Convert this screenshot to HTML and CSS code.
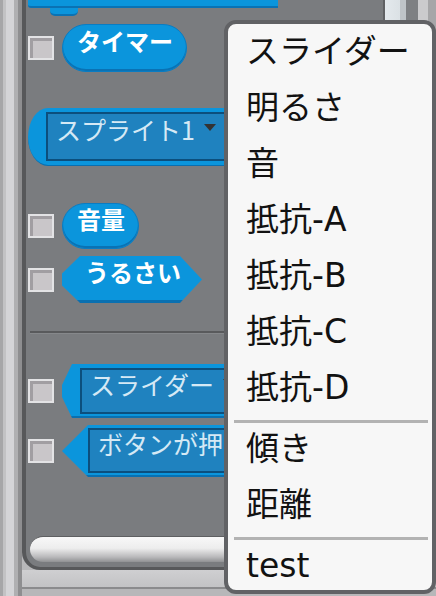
FILE: index.html
```html
<!DOCTYPE html>
<html lang="ja">
<head>
<meta charset="utf-8">
<title>Palette menu</title>
<link rel="stylesheet" href="styles.css">
</head>
<body>
<div class="app">
  <div class="lframe"></div>
  <div class="main">
    <div class="upper">
      <div class="palette">
        <div class="stack"><div class="stack-body"></div><div class="stack-bump"></div></div>
        <div class="row row-timer">
          <span class="check"></span>
          <div class="reporter timer"><span class="lbl">タイマー</span></div>
        </div>
        <div class="row row-sprite">
          <div class="sprite-rep">
            <div class="field"><span class="ftxt">スプライト1</span><span class="tri"></span></div>
          </div>
        </div>
        <div class="row row-vol">
          <span class="check"></span>
          <div class="reporter vol"><span class="lbl">音量</span></div>
        </div>
        <div class="row row-loud">
          <span class="check"></span>
          <div class="bool loud"><span class="lbl">うるさい</span></div>
        </div>
        <div class="sep"></div>
        <div class="row row-slider">
          <span class="check"></span>
          <div class="bool-field slider"><div class="field"><span class="ftxt">スライダー</span><span class="tri"></span></div></div>
        </div>
        <div class="row row-button">
          <span class="check"></span>
          <div class="bool-field button"><div class="field"><span class="ftxt">ボタンが押</span></div></div>
        </div>
        <div class="hscroll"></div>
      </div>
      <div class="vscroll"></div>
      <div class="rframe"></div>
    </div>
    <div class="bframe"></div>
  </div>
</div>
<ul class="menu">
  <li><span class="mt">スライダー</span></li>
  <li><span class="mt">明るさ</span></li>
  <li><span class="mt">音</span></li>
  <li><span class="mt">抵抗-A</span></li>
  <li><span class="mt">抵抗-B</span></li>
  <li><span class="mt">抵抗-C</span></li>
  <li><span class="mt">抵抗-D</span></li>
  <li class="msep"></li>
  <li><span class="mt">傾き</span></li>
  <li><span class="mt">距離</span></li>
  <li class="msep"></li>
  <li><span class="mt">test</span></li>
</ul>
</body>
</html>
```

FILE: styles.css
```css
* { box-sizing: border-box; margin: 0; padding: 0; }
html, body { width: 436px; height: 596px; overflow: hidden; }
body {
  background: #b8b8ba;
  font-family: "Noto Sans CJK JP", sans-serif;
  position: relative;
}
.app { display: flex; height: 596px; }
.lframe {
  width: 22px; flex: none;
  background: linear-gradient(to right,
    #a6a6a8 0, #a6a6a8 3px, #c2c2c4 3px, #c2c2c4 6px,
    #d4d4d7 6px, #d4d4d7 14px, #afafb1 14px, #afafb1 18px,
    #8e8e90 18px, #8e8e90 22px);
}
.main { flex: 1; display: flex; flex-direction: column; min-width: 0; }
.upper { flex: 1; display: flex; min-height: 0; }
.palette {
  width: 361px; flex: none;
  background: #7a7c7f;
  border-left: 4px solid #57585a;
  border-bottom: 3px solid #57585a;
  border-bottom-left-radius: 18px;
  overflow: hidden;
  display: flex; flex-direction: column;
  padding-left: 2px;
}
.vscroll {
  width: 35px; flex: none;
  background: linear-gradient(to right,
    #606164 0, #606164 2px, #e4e9ed 2px, #dbe1e5 17px,
    #bfc4c8 17px, #bfc4c8 23px, #7e8083 23px);
}
.rframe {
  width: 18px; flex: none;
  background: linear-gradient(to right, #cbcbcd 0, #cbcbcd 10px, #a6a6a8 10px);
}
.bframe {
  height: 26px; flex: none;
  background: linear-gradient(to bottom,
    #cfcfd1 0, #c3c3c5 17px, #8b8b8d 17px, #8b8b8d 19px, #b7b7b9 19px);
}

/* stack block bottom */
.stack { flex: none; height: 16px; }
.stack-body {
  width: 250px; height: 8px;
  background: #0b95dc;
  border-bottom: 2px solid #0a72b4;
  border-bottom-left-radius: 3px;
}
.stack-bump {
  margin-left: 22px; width: 28px; height: 8px;
  background: #0b95dc;
  border-bottom: 2px solid #0a72b4;
  border-radius: 0 0 5px 5px;
}

.row { display: flex; align-items: center; flex: none; }
.check {
  width: 26px; height: 24px; flex: none;
  border: 2px solid #e3e3e5;
  background: #c9c6c9;
  box-shadow: inset 3px 3px 0 #a19ea2;
  margin-right: 8px;
}
.row-timer { margin-top: 8px; height: 48px; }
.row-sprite { margin-top: 36px; height: 58px; }
.row-vol { margin-top: 37px; height: 46px; }
.row-loud { margin-top: 7px; height: 47px; }
.row-slider { margin-top: 30px; height: 54px; }
.row-button { margin-top: 7px; height: 52px; }

.lbl {
  font-weight: 700; font-size: 24px; line-height: 24px;
  color: #ffffff; white-space: nowrap;
}
.reporter {
  height: 100%;
  border-radius: 24px;
  background: #0b95dc;
  border: 1px solid #0a7cc2;
  box-shadow: inset 0 -2px 0 #0a72b4;
  display: flex; align-items: center;
  padding: 0 13px 14px 14px;
}
.bool {
  height: 100%;
  width: 140px;
  background: linear-gradient(#0b95dc 0, #0b95dc calc(100% - 3px), #0a70b0 calc(100% - 3px));
  clip-path: polygon(18px 0, calc(100% - 22px) 0, 100% 50%, calc(100% - 22px) 100%, 18px 100%, 0 calc(50% + 6px), 0 calc(50% - 6px));
  display: flex; align-items: center;
  padding: 0 0 16px 23px;
}

.field {
  background: #1f82bf;
  border: 2px solid #0c4f7d;
  display: flex; align-items: center;
  padding: 0 0 14px 8px;
  white-space: nowrap;
}
.ftxt { font-size: 25px; line-height: 25px; color: #d5e9f5; }
.tri {
  width: 0; height: 0; flex: none;
  border-left: 6px solid transparent;
  border-right: 6px solid transparent;
  border-top: 7px solid #333333;
  margin-left: 9px; margin-top: -4px;
}

.sprite-rep {
  height: 100%; width: 280px;
  background: #0b95dc;
  border-bottom: 1px solid #0a6fb0;
  border-radius: 20px 0 0 20px / 29px 0 0 29px;
  display: flex; flex-direction: column;
  padding: 4px 0 4px 18px;
}
.sprite-rep .field { flex: 1; }

.bool-field {
  height: 100%; width: 280px;
  background: linear-gradient(#0b95dc 0, #0b95dc calc(100% - 2px), #0a70b0 calc(100% - 2px));
  display: flex; flex-direction: column;
}
.bool-field .field { flex: 1; }
.slider {
  clip-path: polygon(10px 0, 100% 0, 100% 100%, 10px 100%, 0 calc(50% + 6px), 0 calc(50% - 6px));
  padding: 4px 0 4px 18px;
}
.button {
  clip-path: polygon(26px 0, 100% 0, 100% 100%, 26px 100%, 0 50%);
  padding: 3px 0 4px 26px;
}

.sep {
  flex: none;
  margin: 28px 0 0 2px;
  height: 3px;
  border-top: 2px solid #595a5c;
  border-bottom: 1px solid #86888b;
}

.hscroll {
  flex: none;
  margin: auto 0 5px 2px;
  width: 340px; height: 26px;
  border-radius: 13px 0 0 13px;
  border-top: 1px solid #5e5f61;
  background: linear-gradient(to bottom, #f8f8f8 0, #ededed 45%, #b9b9bb 80%, #909193 100%);
}

/* context menu */
.menu {
  position: absolute;
  left: 224px; top: 20px;
  width: 212px; height: 574px;
  background: #f7f7f7;
  border: 4px solid #616265;
  border-radius: 12px;
  list-style: none;
  padding-top: 2px;
  font-family: "DejaVu Sans", "Noto Sans CJK JP", sans-serif;
  font-size: 33px;
  color: #121212;
}
.menu li {
  height: 56px;
  display: flex; align-items: center;
  padding: 0 0 4px 18px;
  white-space: nowrap;
}
.menu .mt { line-height: 40px; }
.menu li.msep {
  height: 3px;
  padding: 0;
  margin: 2px 4px 0 6px;
  background: #b3b3b3;
}
```
